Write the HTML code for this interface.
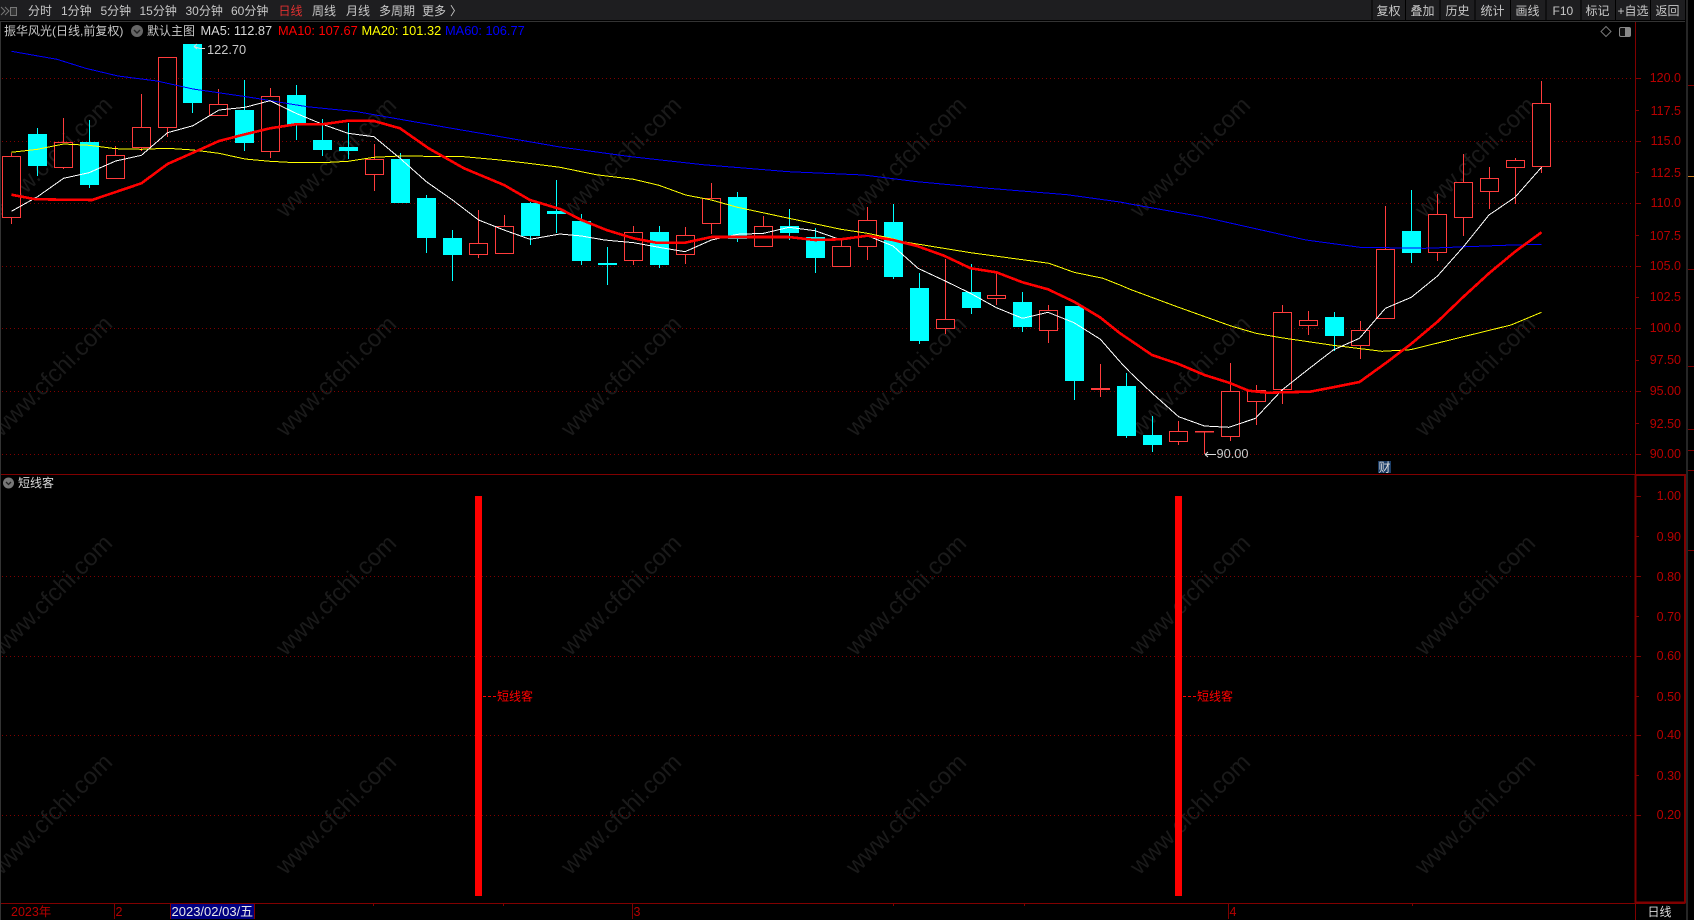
<!DOCTYPE html>
<html lang="zh-CN">
<head>
<meta charset="utf-8">
<title>振华风光</title>
<style>
html,body{margin:0;padding:0;background:#000;width:1694px;height:920px;overflow:hidden}
svg{display:block;position:absolute;left:0;top:0;font-size:13px}
text{font-family:"Liberation Sans","Noto Sans CJK SC",sans-serif;white-space:pre}
.wm text{fill:#1a1a1a;font-size:24px;text-anchor:middle}
.tb text{fill:#c8c8c8;font-size:12px}
.ax text{fill:#b80000;font-size:12.5px;text-anchor:end}
.up rect{fill:#000;stroke:#ff3c3c;stroke-width:1;shape-rendering:crispEdges}
.dn rect{fill:#0ff;shape-rendering:crispEdges}
.g{stroke:#800000;stroke-width:1;stroke-dasharray:1 3;shape-rendering:crispEdges;fill:none}
.l{fill:none;stroke-linejoin:round;shape-rendering:crispEdges}
</style>
</head>
<body>
<svg width="1694" height="920" viewBox="0 0 1694 920" xmlns="http://www.w3.org/2000/svg">
<rect width="1694" height="920" fill="#000"/>

<!-- watermark -->
<g class="wm">
<text x="52" y="165" transform="rotate(-45 52 157)">www.cfchi.com</text><text x="336" y="165" transform="rotate(-45 336 157)">www.cfchi.com</text><text x="621" y="165" transform="rotate(-45 621 157)">www.cfchi.com</text><text x="906" y="165" transform="rotate(-45 906 157)">www.cfchi.com</text><text x="1190" y="165" transform="rotate(-45 1190 157)">www.cfchi.com</text><text x="1475" y="165" transform="rotate(-45 1475 157)">www.cfchi.com</text>
<text x="52" y="384" transform="rotate(-45 52 376)">www.cfchi.com</text><text x="336" y="384" transform="rotate(-45 336 376)">www.cfchi.com</text><text x="621" y="384" transform="rotate(-45 621 376)">www.cfchi.com</text><text x="906" y="384" transform="rotate(-45 906 376)">www.cfchi.com</text><text x="1190" y="384" transform="rotate(-45 1190 376)">www.cfchi.com</text><text x="1475" y="384" transform="rotate(-45 1475 376)">www.cfchi.com</text>
<text x="52" y="603" transform="rotate(-45 52 595)">www.cfchi.com</text><text x="336" y="603" transform="rotate(-45 336 595)">www.cfchi.com</text><text x="621" y="603" transform="rotate(-45 621 595)">www.cfchi.com</text><text x="906" y="603" transform="rotate(-45 906 595)">www.cfchi.com</text><text x="1190" y="603" transform="rotate(-45 1190 595)">www.cfchi.com</text><text x="1475" y="603" transform="rotate(-45 1475 595)">www.cfchi.com</text>
<text x="52" y="822" transform="rotate(-45 52 814)">www.cfchi.com</text><text x="336" y="822" transform="rotate(-45 336 814)">www.cfchi.com</text><text x="621" y="822" transform="rotate(-45 621 814)">www.cfchi.com</text><text x="906" y="822" transform="rotate(-45 906 814)">www.cfchi.com</text><text x="1190" y="822" transform="rotate(-45 1190 814)">www.cfchi.com</text><text x="1475" y="822" transform="rotate(-45 1475 814)">www.cfchi.com</text>
</g>

<!-- grid -->
<path class="g" d="M2 78.5H1634M2 141.5H1634M2 203.5H1634M2 266.5H1634M2 328.5H1634M2 391.5H1634M2 454.5H1634M2 576.5H1634M2 656.5H1634M2 735.5H1634M2 815.5H1634"/>

<!-- wicks -->
<path fill="none" stroke="#ff3c3c" stroke-width="1" shape-rendering="crispEdges" d="M11.5 153V156M11.5 218V224M63.5 118V142M63.5 168V169M115.5 146V155M141.5 94V127M141.5 148V151M167.5 128V137M218.5 89V104M270.5 88V96M270.5 152V158M374.5 144V159M374.5 175V191M478.5 210V243M478.5 255V258M504.5 215V226M633.5 226V232M633.5 261V265M685.5 227V235M685.5 255V264M711.5 183V198M711.5 224V234M763.5 216V226M841.5 240V246M867.5 207V220M867.5 247V260M945.5 259V319M945.5 329V334M996.5 272V295M996.5 299V305M1048.5 305V310M1048.5 331V343M1100.5 364V397M1178.5 421V431M1178.5 442V445M1204.5 432V454M1230.5 363V391M1230.5 437V441M1256.5 385V390M1256.5 402V425M1282.5 305V312M1282.5 390V404M1308.5 311V320M1308.5 326V335M1360.5 321V330M1360.5 346V359M1385.5 206V249M1437.5 194V214M1437.5 253V261M1463.5 154V182M1463.5 218V236M1489.5 167V178M1489.5 192V209M1515.5 158V160M1515.5 168V204M1541.5 81V103M1541.5 167V173"/>
<path fill="none" stroke="#0ff" stroke-width="1" shape-rendering="crispEdges" d="M37.5 128V176M89.5 120V188M192.5 44V113M244.5 80V151M296.5 85V140M322.5 119V156M348.5 123V159M400.5 153V203M426.5 195V253M452.5 230V281M530.5 202V245M556.5 180V233M581.5 214V265M607.5 247V285M659.5 226V268M737.5 192V242M789.5 209V240M815.5 228V273M893.5 204V279M919.5 273V344M971.5 264V314M1022.5 292V332M1074.5 306V400M1126.5 373V438M1152.5 416V452M1334.5 312V351M1411.5 190V263"/>

<!-- up candles -->
<g class="up">
<rect x="2.5" y="156.5" width="18" height="61"/><rect x="54.5" y="142.5" width="18" height="25"/><rect x="106.5" y="155.5" width="18" height="23"/><rect x="132.5" y="127.5" width="18" height="20"/><rect x="158.5" y="57.5" width="18" height="70"/><rect x="209.5" y="104.5" width="18" height="11"/><rect x="261.5" y="96.5" width="18" height="55"/><rect x="365.5" y="159.5" width="18" height="15"/><rect x="469.5" y="243.5" width="18" height="11"/><rect x="495.5" y="226.5" width="18" height="27"/><rect x="624.5" y="232.5" width="18" height="28"/><rect x="676.5" y="235.5" width="18" height="19"/><rect x="702.5" y="198.5" width="18" height="25"/><rect x="754.5" y="226.5" width="18" height="20"/><rect x="832.5" y="246.5" width="18" height="20"/><rect x="858.5" y="220.5" width="18" height="26"/><rect x="936.5" y="319.5" width="18" height="9"/><rect x="987.5" y="295.5" width="18" height="3"/><rect x="1039.5" y="310.5" width="18" height="20"/><rect x="1091.5" y="388.5" width="18" height="1"/><rect x="1169.5" y="431.5" width="18" height="10"/><rect x="1195.5" y="431.5" width="18" height="0.5"/><rect x="1221.5" y="391.5" width="18" height="45"/><rect x="1247.5" y="390.5" width="18" height="11"/><rect x="1273.5" y="312.5" width="18" height="77"/><rect x="1299.5" y="320.5" width="18" height="5"/><rect x="1351.5" y="330.5" width="18" height="15"/><rect x="1376.5" y="249.5" width="18" height="69"/><rect x="1428.5" y="214.5" width="18" height="38"/><rect x="1454.5" y="182.5" width="18" height="35"/><rect x="1480.5" y="178.5" width="18" height="13"/><rect x="1506.5" y="160.5" width="18" height="7"/><rect x="1532.5" y="103.5" width="18" height="63"/>
</g>

<!-- down candles -->
<g class="dn">
<rect x="28" y="134" width="19" height="32"/><rect x="80" y="142" width="19" height="43"/><rect x="183" y="44" width="19" height="59"/><rect x="235" y="110" width="19" height="33"/><rect x="287" y="95" width="19" height="30"/><rect x="313" y="140" width="19" height="10"/><rect x="339" y="147" width="19" height="4"/><rect x="391" y="159" width="19" height="44"/><rect x="417" y="198" width="19" height="40"/><rect x="443" y="238" width="19" height="17"/><rect x="521" y="203" width="19" height="33"/><rect x="547" y="211" width="19" height="3"/><rect x="572" y="221" width="19" height="40"/><rect x="598" y="263" width="19" height="2"/><rect x="650" y="232" width="19" height="33"/><rect x="728" y="197" width="19" height="42"/><rect x="780" y="226" width="19" height="7"/><rect x="806" y="237" width="19" height="21"/><rect x="884" y="222" width="19" height="55"/><rect x="910" y="288" width="19" height="53"/><rect x="962" y="292" width="19" height="16"/><rect x="1013" y="302" width="19" height="25"/><rect x="1065" y="306" width="19" height="75"/><rect x="1117" y="386" width="19" height="50"/><rect x="1143" y="435" width="19" height="10"/><rect x="1325" y="317" width="19" height="19"/><rect x="1402" y="231" width="19" height="22"/>
</g>

<!-- MA60 -->
<polyline class="l" stroke="#0000ff" stroke-width="1" points="11.4,51.3 57,59.3 85.7,68.3 118,76 157,81 193,89 250,97.3 307,106.7 357,111.7 428.6,124.3 560,147 631,156.7 703,164.7 788.6,171.7 863.6,175 917,181.7 988.6,188.3 1067,194.7 1120,202 1130,204 1202,216.7 1306,240 1360,247.3 1425,248.3 1504,245.3 1541.5,244.3"/>
<!-- MA20 -->
<polyline class="l" stroke="#ffff00" stroke-width="1" points="11.4,152.3 37.5,149.3 63.6,144 89,145.3 115.7,148.7 141.4,149.3 167.5,148.3 193,150 219,153.3 245,159 270,161.3 296,162.7 322,162.7 348,161.3 374,157.3 400,156 464,156.7 500,160 528.6,163.3 560,167.3 596,174.7 633.6,179.3 659,185.3 685.7,195 711.4,200 737.5,207.3 789,218.3 841,229.3 867.5,233.3 893,238.7 903,241.7 970.7,252.7 1049,263.3 1074,272.3 1103,278.3 1120,285 1130,289.3 1177,306.7 1231,326 1256,333.3 1281,337.7 1333,345.3 1382,351.3 1410.5,349.7 1454,339 1511,325 1541.5,312.3"/>
<!-- MA5 -->
<polyline class="l" stroke="#ffffff" stroke-width="1" points="11.4,211.3 37.5,196.7 63.6,178.3 89,172.7 115.7,161 141.4,155.3 167.5,132.7 193,125.7 219,110 245,107.3 270,100.7 296,113.3 322.5,124.3 348,133.3 374,136.7 400,158.3 426.4,181.7 452.5,200 478.6,220 504,230 530,239.3 560,234 581.4,236 604.6,240 633.6,242.7 659,247.3 685,251.7 711.4,240 737.5,234.3 763.6,233.3 789,227.3 815,230.7 841.4,240 867.5,235.7 893,246 918,268.3 944.6,280.7 970.4,293.3 996.4,307.7 1022.5,318.3 1048,312.3 1074,322.7 1100.4,339.3 1120,361.7 1130,372.3 1152.3,393.3 1178.6,416.7 1204.5,426 1229,427.3 1255.5,418.3 1282,390 1307.3,370 1333.2,350 1359.5,338.3 1385.4,308.3 1411.3,297.3 1437.5,276 1463.5,246.7 1489,215 1515,197.3 1541.5,167.3"/>
<!-- MA10 -->
<polyline class="l" stroke="#ff0000" stroke-width="2.6" points="11.4,194.7 35.7,199.3 92,200 141.4,183.3 167.5,164 193,152.7 219,141 245,134.3 270,128.3 296,124.3 322.5,124.3 348,120.7 374,121 400,128.3 428.6,148.3 464,168.3 504,185 530,200 560,209 581.4,220 606.4,230 633.6,238.3 656.4,242.7 685,242.7 711.4,237 788.6,237 815,240 841,239.3 867.5,235.7 893,240 917,246 944,255.7 970.7,268.3 996.4,272.3 1022.5,282.3 1048,289.3 1074,301.7 1100,317.3 1120,333.3 1130,340 1152,355 1178.6,364 1204.5,375 1229,382.7 1248.7,390.7 1266.7,392.7 1310,391.7 1333,387.3 1359.5,382 1385.4,363.3 1411,344 1437.5,321.7 1463.5,296.7 1489,273.3 1515,251.7 1541.5,232.3"/>

<!-- red bars -->
<rect x="475" y="496" width="7" height="400" fill="#f00"/>
<rect x="1175" y="496" width="7" height="400" fill="#f00"/>
<path d="M483 696.5H497M1183 696.5H1197" stroke="#f00" stroke-width="1" stroke-dasharray="3 2" shape-rendering="crispEdges"/>
<text x="497" y="700.5" fill="#f00" font-size="12">短线客</text>
<text x="1197" y="700.5" fill="#f00" font-size="12">短线客</text>

<!-- toolbar -->
<rect x="0" y="0" width="1685" height="20" fill="#1e1e20"/>
<rect x="0" y="21" width="1685" height="1" fill="#333"/>
<path d="M1 7l4 4-4 4M5 7l4 4-4 4" fill="none" stroke="#777" stroke-width="1"/>
<rect x="10.5" y="7.5" width="6" height="8" fill="#333" stroke="#777"/>
<g class="tb">
<text x="28" y="15">分时</text><text x="61" y="15">1分钟</text><text x="100.5" y="15">5分钟</text><text x="139.5" y="15">15分钟</text><text x="185.5" y="15">30分钟</text><text x="231" y="15">60分钟</text><text x="278.5" y="15" style="fill:#e03030">日线</text><text x="312" y="15">周线</text><text x="346" y="15">月线</text><text x="379" y="15">多周期</text><text x="422" y="15">更多</text><text x="450" y="15">〉</text>
<text x="1376.5" y="15">复权</text><text x="1410.5" y="15">叠加</text><text x="1445.5" y="15">历史</text><text x="1480.5" y="15">统计</text><text x="1515.5" y="15">画线</text><text x="1552.5" y="15">F10</text><text x="1585.5" y="15">标记</text><text x="1617.5" y="15">+自选</text><text x="1655.5" y="15">返回</text>
</g>
<path d="M1372 0V20M1405.5 0V20M1440 0V20M1475 0V20M1510.5 0V20M1546 0V20M1581 0V20M1615.5 0V20M1650.5 0V20M1685.5 0V22" stroke="#000" stroke-width="1" shape-rendering="crispEdges"/>

<!-- legend row -->
<text x="4" y="35" fill="#c8c8c8" font-size="12">振华风光(日线,前复权)</text>
<circle cx="137" cy="31" r="6" fill="#666"/>
<path d="M134 30l3 3 3-3" fill="none" stroke="#222" stroke-width="1.4"/>
<text x="147" y="35" fill="#c8c8c8" font-size="12">默认主图</text>
<text x="200.5" y="35" fill="#d8d8d8" font-size="12.8">MA5: 112.87</text>
<text x="278" y="35" fill="#ff0000" font-size="12.8">MA10: 107.67</text>
<text x="361.5" y="35" fill="#ffff00" font-size="12.8">MA20: 101.32</text>
<text x="445" y="35" fill="#0000ff" font-size="12.8">MA60: 106.77</text>

<!-- top right icons -->
<path d="M1606 26.5l5 5-5 5-5-5z" fill="none" stroke="#777" stroke-width="1"/>
<rect x="1619.5" y="27.5" width="11" height="9" rx="1.5" fill="#111" stroke="#888"/>
<rect x="1625" y="28" width="5" height="8" fill="#888"/>

<!-- extremes -->
<path d="M200 48.5L194 46.5M194 46.5l3-2.5M194 46.5l3 2.5M200 48.5H205" fill="none" stroke="#ddd" stroke-width="1"/>
<text x="207" y="54" fill="#c8c8c8" font-size="12.8">122.70</text>
<path d="M1205 454.5H1216M1205 454.5l3-2.5M1205 454.5l3 2.5" fill="none" stroke="#ddd" stroke-width="1"/>
<text x="1216.5" y="458" fill="#c8c8c8" font-size="12.8">90.00</text>
<rect x="1378" y="461" width="13" height="12" fill="#1a3c66"/>
<text x="1378.5" y="471.5" fill="#ddd" font-size="12">财</text>

<!-- left edge -->
<rect x="0" y="22" width="1" height="898" fill="#333"/>

<!-- dividers and axes -->
<path d="M1 474.5H1684M1 903.5H1685" stroke="#800000" stroke-width="1" shape-rendering="crispEdges"/>
<path d="M1635.5 22V475M1635.5 903V920" stroke="#800000" stroke-width="1" shape-rendering="crispEdges"/>
<path d="M1635.5 475V902.5H1685V475Z" fill="none" stroke="#800000" stroke-width="2" shape-rendering="crispEdges"/>
<path d="M1636 78.5h5M1636 110.5h3M1636 141.5h5M1636 172.5h3M1636 203.5h5M1636 235.5h3M1636 266.5h5M1636 297.5h3M1636 328.5h5M1636 360.5h3M1636 391.5h5M1636 423.5h3M1636 454.5h5M1636 496.5h5M1636 536.5h3M1636 576.5h5M1636 616.5h3M1636 656.5h5M1636 696.5h3M1636 735.5h5M1636 775.5h3M1636 815.5h5" stroke="#800000" stroke-width="1" shape-rendering="crispEdges"/>
<g class="ax">
<text x="1681" y="82">120.0</text><text x="1681" y="115">117.5</text><text x="1681" y="145">115.0</text><text x="1681" y="177">112.5</text><text x="1681" y="207">110.0</text><text x="1681" y="240">107.5</text><text x="1681" y="270">105.0</text><text x="1681" y="301">102.5</text><text x="1681" y="332">100.0</text><text x="1681" y="364">97.50</text><text x="1681" y="395">95.00</text><text x="1681" y="428">92.50</text><text x="1681" y="458">90.00</text>
<text x="1681" y="500">1.00</text><text x="1681" y="541">0.90</text><text x="1681" y="581">0.80</text><text x="1681" y="621">0.70</text><text x="1681" y="660">0.60</text><text x="1681" y="701">0.50</text><text x="1681" y="739">0.40</text><text x="1681" y="780">0.30</text><text x="1681" y="819">0.20</text>
</g>

<!-- far right strip -->
<rect x="1686" y="0" width="2" height="920" fill="#262626"/>
<path d="M1688 85.5h6M1688 269.5h6M1688 366.5h6M1688 429.5h6M1688 450.5h6M1688 470.5h6M1688 550.5h6" stroke="#800000" stroke-width="1" shape-rendering="crispEdges"/>
<path d="M1688 176.5h6" stroke="#d08020" stroke-width="1" shape-rendering="crispEdges"/>

<!-- subpanel title -->
<circle cx="8.5" cy="483" r="5.5" fill="#777"/>
<path d="M6 482l2.5 2.5L11 482" fill="none" stroke="#222" stroke-width="1.3"/>
<text x="18" y="487" fill="#d8d8d8" font-size="12">短线客</text>

<!-- bottom axis -->
<path d="M114.5 904V919M170.5 904V919M254.5 904V919M632.5 904V919M1228.5 904V919" stroke="#800000" stroke-width="1" shape-rendering="crispEdges"/>
<path d="M373.5 904v2M503.5 904v2M893.5 904v2M1024.5 904v2M1412.5 904v2" stroke="#800000" stroke-width="1" shape-rendering="crispEdges"/>
<text x="11" y="916" fill="#b80000" font-size="12.5">2023年</text>
<text x="115.5" y="916" fill="#b80000" font-size="12.5">2</text>
<rect x="171" y="904" width="83" height="15" fill="#000080"/>
<text x="171.5" y="916" fill="#e8e8e8" font-size="13">2023/02/03/五</text>
<text x="633.5" y="916" fill="#b80000" font-size="12.5">3</text>
<text x="1229.5" y="916" fill="#b80000" font-size="12.5">4</text>
<text x="1647.5" y="916" fill="#d8d8d8" font-size="12">日线</text>
</svg>
</body>
</html>
